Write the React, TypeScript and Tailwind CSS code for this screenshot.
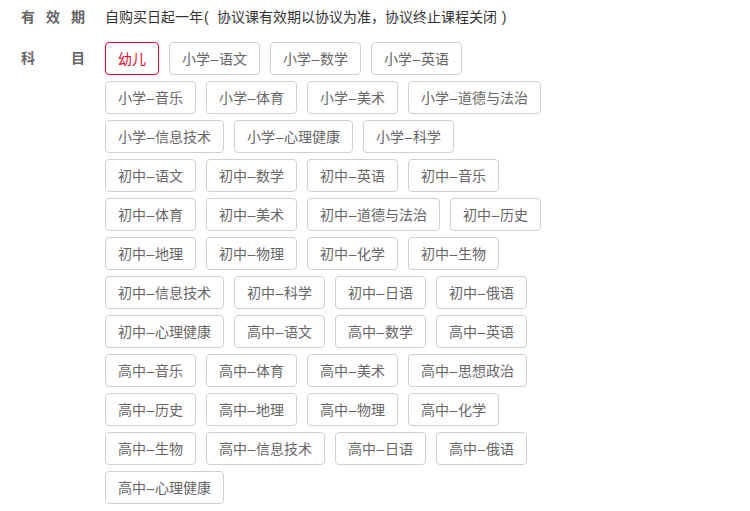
import React from "react";

const subjects = [
  "幼儿",
  "小学–语文", "小学–数学", "小学–英语", "小学–音乐", "小学–体育", "小学–美术", "小学–道德与法治",
  "小学–信息技术", "小学–心理健康", "小学–科学",
  "初中–语文", "初中–数学", "初中–英语", "初中–音乐", "初中–体育", "初中–美术", "初中–道德与法治", "初中–历史",
  "初中–地理", "初中–物理", "初中–化学", "初中–生物", "初中–信息技术", "初中–科学", "初中–日语", "初中–俄语",
  "初中–心理健康",
  "高中–语文", "高中–数学", "高中–英语", "高中–音乐", "高中–体育", "高中–美术", "高中–思想政治",
  "高中–历史", "高中–地理", "高中–物理", "高中–化学", "高中–生物", "高中–信息技术", "高中–日语", "高中–俄语",
  "高中–心理健康",
];

function Label({ s }: { s: string }) {
  const parts = s.split("–");
  if (parts.length === 1) return <>{s}</>;
  return (
    <>
      {parts[0]}
      <span className="inline-block w-[9px] text-center">–</span>
      {parts[1]}
    </>
  );
}

export default function App() {
  return (
    <div
      className="w-[750px] h-[511px] bg-white pl-[21px] pt-[6px] text-[14px]"
      style={{ fontFamily: '"Liberation Sans", "Noto Sans CJK SC", sans-serif' }}
    >
      <div className="flex items-start">
        <div className="w-[64px] flex justify-between font-bold text-[#666] leading-[22px]">
          <span>有</span><span>效</span><span>期</span>
        </div>
        <div className="ml-[20px] text-[#333] leading-[22px] whitespace-nowrap">
          自购买日起一年
          <span className="inline-block w-[14px] pl-[1px] text-left">(</span>
          协议课有效期以协议为准，协议终止课程关闭
          <span className="inline-block w-[14px] text-center">)</span>
        </div>
      </div>
      <div className="flex items-start mt-[14px]">
        <div className="w-[64px] flex justify-between font-bold text-[#666] leading-[33px]">
          <span>科</span><span>目</span>
        </div>
        <div className="ml-[20px] w-[442px] flex flex-wrap gap-x-[10px] gap-y-[6px]">
          {subjects.map((s, i) => (
            <div
              key={s}
              className={
                i === 0
                  ? "h-[33px] px-[12px] flex items-center border border-[#e60026] text-[#e60026] rounded-[4px] leading-none whitespace-nowrap"
                  : "h-[33px] px-[12px] flex items-center border border-[#d0d0d0] text-[#666] rounded-[4px] leading-none whitespace-nowrap"
              }
            >
              <Label s={s} />
            </div>
          ))}
        </div>
      </div>
    </div>
  );
}
